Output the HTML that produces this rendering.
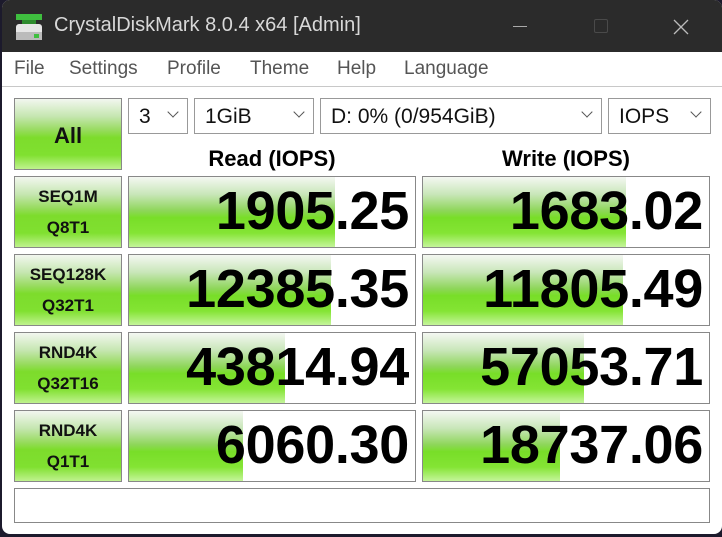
<!DOCTYPE html>
<html><head><meta charset="utf-8"><style>
*{margin:0;padding:0;box-sizing:border-box}
body{width:722px;height:537px;background:#1c1a2c;overflow:hidden;font-family:"Liberation Sans",sans-serif;position:relative}
.win{position:absolute;left:2px;top:0;width:720px;height:534px;background:#fff;border-radius:8px 8px 8px 8px;overflow:hidden}
.title{position:absolute;left:0;top:0;width:720px;height:52px;background:#2b2b2b;color:#d8d8d8;font-size:20px}
.title span{position:absolute;left:52px;top:14px}
.menu{position:absolute;left:0;top:52px;width:720px;height:35px;border-bottom:1px solid #c8c8c8;font-size:19px;color:#555}
.menu span{position:absolute;top:6px}
.abs{position:absolute}
.btn{position:absolute;border:1px solid #888;background:linear-gradient(#f2f7ef 0%,#c5e6b0 25%,#96db5c 45%,#7ddc2c 55%,#80e030 80%,#bff28e 100%);font-weight:bold;text-align:center;color:#111}
.sel{position:absolute;top:98px;height:36px;border:1px solid #999;background:#fff;font-size:21px;color:#111;padding:6px 0 0 10px}
.sel i{position:absolute;right:10px;top:9px;width:8px;height:8px;border-right:1px solid #555;border-bottom:1px solid #555;transform:rotate(45deg)}
.box{position:absolute;width:288px;height:72px;border:1px solid #888;background:#fff;overflow:hidden}
.box .g{position:absolute;left:0;top:0;height:100%;background:linear-gradient(#f4f8f2 0%,#c8e6b8 25%,#8ed65a 48%,#78de28 58%,#84e434 80%,#c4f59a 100%)}
.box .n{position:absolute;right:6px;top:3px;font-size:54px;font-weight:bold;color:#000;letter-spacing:-0.3px}
.hd{position:absolute;top:146px;font-size:22px;font-weight:bold;width:288px;text-align:center;color:#000}
.lb{font-size:17px;line-height:31px;padding-top:4px}
</style></head><body>
<div class="win">
<div class="title">
<svg class="abs" style="left:12px;top:12px" width="30" height="30"><rect x="2" y="2" width="26" height="6" fill="#3fbf3f"/><rect x="8" y="8" width="14" height="4" fill="#2e8b2e"/><rect x="2" y="12" width="26" height="16" rx="3" fill="#e6e6e6"/><rect x="2" y="20" width="26" height="8" fill="#bbb"/><rect x="20" y="22" width="5" height="4" fill="#3fbf3f"/></svg>
<span>CrystalDiskMark 8.0.4 x64 [Admin]</span>
<div class="abs" style="left:511px;top:26px;width:14px;height:1px;background:#aaa"></div>
<div class="abs" style="left:592px;top:19px;width:14px;height:14px;border:1px solid #4a4a4a;border-radius:2px"></div>
<svg class="abs" style="left:671px;top:19px" width="16" height="16"><path d="M1 1L15 15M15 1L1 15" stroke="#bbb" stroke-width="1.3"/></svg>
</div>
<div class="menu"><span style="left:12px">File</span><span style="left:67px">Settings</span><span style="left:165px">Profile</span><span style="left:248px">Theme</span><span style="left:335px">Help</span><span style="left:402px">Language</span></div>

<div class="btn" style="left:12px;top:98px;width:108px;height:72px;font-size:22px;padding-top:24px">All</div>
<div class="sel" style="left:126px;width:60px">3<i></i></div>
<div class="sel" style="left:192px;width:120px">1GiB<i></i></div>
<div class="sel" style="left:318px;width:282px">D: 0% (0/954GiB)<i></i></div>
<div class="sel" style="left:606px;width:103px">IOPS<i></i></div>

<div class="hd" style="left:126px">Read (IOPS)</div>
<div class="hd" style="left:420px">Write (IOPS)</div>

<div class="btn lb" style="left:12px;top:176px;width:108px;height:72px">SEQ1M<br>Q8T1</div>
<div class="btn lb" style="left:12px;top:254px;width:108px;height:72px">SEQ128K<br>Q32T1</div>
<div class="btn lb" style="left:12px;top:332px;width:108px;height:72px">RND4K<br>Q32T16</div>
<div class="btn lb" style="left:12px;top:410px;width:108px;height:72px">RND4K<br>Q1T1</div>

<div class="box" style="left:126px;top:176px"><div class="g" style="width:206px"></div><div class="n">1905.25</div></div>
<div class="box" style="left:420px;top:176px"><div class="g" style="width:203px"></div><div class="n">1683.02</div></div>
<div class="box" style="left:126px;top:254px"><div class="g" style="width:202px"></div><div class="n">12385.35</div></div>
<div class="box" style="left:420px;top:254px"><div class="g" style="width:200px"></div><div class="n">11805.49</div></div>
<div class="box" style="left:126px;top:332px"><div class="g" style="width:156px"></div><div class="n">43814.94</div></div>
<div class="box" style="left:420px;top:332px"><div class="g" style="width:161px"></div><div class="n">57053.71</div></div>
<div class="box" style="left:126px;top:410px"><div class="g" style="width:114px"></div><div class="n">6060.30</div></div>
<div class="box" style="left:420px;top:410px"><div class="g" style="width:137px"></div><div class="n">18737.06</div></div>

<div class="abs" style="left:12px;top:488px;width:696px;height:35px;border:1px solid #888;background:#fff"></div>
</div>
</body></html>
